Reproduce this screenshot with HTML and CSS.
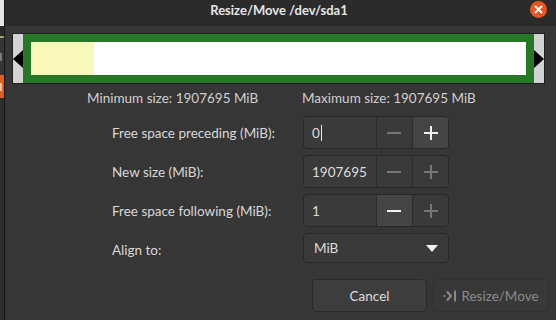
FILE: index.html
```html
<!DOCTYPE html>
<html>
<head>
<meta charset="utf-8">
<link rel="stylesheet" href="styles.css">
</head>
<body>
<div class="screen">
  <div class="bgwin">
    <div class="bg-top"></div>
    <div class="bg-bar"></div>
    <div class="bg-line"></div>
    <div class="bg-mid"><span class="bg-mark"></span></div>
    <div class="bg-orange"><span class="bg-mark light"></span></div>
    <div class="bg-rest"></div>
  </div>
  <div class="dialog">
    <header class="titlebar">
      <span class="title">Resize/Move /dev/sda1</span>
      <span class="close">
        <svg width="17" height="17" viewBox="0 0 17 17"><circle cx="8.5" cy="8.5" r="8.5" fill="#e95420"/><path d="M5.5 5.5 L11.5 11.5 M11.5 5.5 L5.5 11.5" stroke="#fff" stroke-width="2" stroke-linecap="round"/></svg>
      </span>
    </header>
    <main class="content">
      <div class="partbar">
        <div class="handle handle-left"><span class="tri tri-left"></span></div>
        <div class="part">
          <div class="used"></div>
          <div class="free"></div>
        </div>
        <div class="handle handle-right"><span class="tri tri-right"></span></div>
      </div>
      <div class="limits">
        <span class="limit-min">Minimum size: 1907695 MiB</span>
        <span class="limit-max">Maximum size: 1907695 MiB</span>
      </div>
      <div class="form">
        <label class="lbl">Free space preceding (MiB):</label>
        <div class="spin">
          <div class="entry"><span>0</span><span class="caret"></span></div>
          <div class="sbtn dim"><svg width="14" height="14" viewBox="0 0 14 14"><path d="M0 7H14" stroke="currentColor" stroke-width="2"/></svg></div>
          <div class="sbtn hover"><svg width="14" height="14" viewBox="0 0 14 14"><path d="M0 7H14M7 0V14" stroke="currentColor" stroke-width="2"/></svg></div>
        </div>
        <label class="lbl">New size (MiB):</label>
        <div class="spin">
          <div class="entry"><span>1907695</span></div>
          <div class="sbtn dim"><svg width="14" height="14" viewBox="0 0 14 14"><path d="M0 7H14" stroke="currentColor" stroke-width="2"/></svg></div>
          <div class="sbtn dim"><svg width="14" height="14" viewBox="0 0 14 14"><path d="M0 7H14M7 0V14" stroke="currentColor" stroke-width="2"/></svg></div>
        </div>
        <label class="lbl">Free space following (MiB):</label>
        <div class="spin">
          <div class="entry"><span>1</span></div>
          <div class="sbtn hover"><svg width="14" height="14" viewBox="0 0 14 14"><path d="M0 7H14" stroke="currentColor" stroke-width="2"/></svg></div>
          <div class="sbtn dim"><svg width="14" height="14" viewBox="0 0 14 14"><path d="M0 7H14M7 0V14" stroke="currentColor" stroke-width="2"/></svg></div>
        </div>
        <label class="lbl">Align to:</label>
        <div class="combo">
          <span>MiB</span>
          <svg width="12" height="7" viewBox="0 0 12 7"><path d="M0 0H12L6 7Z" fill="#f0f0f0"/></svg>
        </div>
      </div>
      <div class="actions">
        <button class="btn">Cancel</button>
        <button class="btn disabled">
          <svg width="14" height="14" viewBox="0 0 14 14"><circle cx="1.5" cy="7" r="1.1" fill="currentColor"/><path d="M4 2.5L8 7L4 11.5" fill="none" stroke="currentColor" stroke-width="2"/><path d="M12 1.5V12.5" stroke="currentColor" stroke-width="2"/></svg>
          <span>Resize/Move</span>
        </button>
      </div>
    </main>
  </div>
</div>
</body>
</html>
```
FILE: styles.css
```css
* { box-sizing: border-box; }
html, body { margin: 0; padding: 0; }
body {
  width: 556px;
  height: 320px;
  overflow: hidden;
  background: #2d2d2d;
  font-family: "Lato", "Noto Sans", sans-serif;
  font-size: 13.5px;
}
.screen {
  display: flex;
  width: 556px;
  height: 320px;
}
.bgwin {
  width: 4px;
  display: flex;
  flex-direction: column;
  overflow: hidden;
}
.bg-top { height: 26px; background: #e4e4e4; }
.bg-bar { height: 10px; background: #2a2a2a; }
.bg-line { height: 2px; background: #8fa86a; }
.bg-mid { height: 37px; background: #353535; display: flex; align-items: center; }
.bg-orange { height: 23px; background: #e05e26; display: flex; align-items: center; }
.bg-mark { width: 2px; height: 8px; background: #7a7a7a; }
.bg-mark.light { background: #f1c3a3; }
.bg-rest { flex: 1; background: #2e2e2e; }

.dialog {
  flex: 1;
  display: flex;
  flex-direction: column;
  border-left: 1px solid #161616;
  background: #363636;
  color: #d8d8d8;
}
.titlebar {
  height: 26px;
  background: #2b2b2b;
  display: flex;
  align-items: center;
  justify-content: center;
  position: relative;
}
.title {
  font-weight: bold;
  font-size: 13px;
  color: #e6e6e6;
  margin-left: -3px;
  margin-top: -6px;
}
.close {
  position: absolute;
  right: 9px;
  top: 1px;
  width: 17px;
  height: 17px;
  display: flex;
}
.content {
  flex: 1;
  display: flex;
  flex-direction: column;
}
.partbar {
  margin: 7px 11px 0 7px;
  height: 51px;
  border: 1px solid #1f1f1f;
  display: flex;
}
.handle {
  width: 10px;
  background: #d3d3d3;
  display: flex;
  align-items: center;
}
.handle-right { justify-content: flex-end; }
.tri { width: 0; height: 0; border-top: 9px solid transparent; border-bottom: 9px solid transparent; }
.tri-left { border-right: 10px solid #000; }
.tri-right { border-left: 10px solid #000; }
.part {
  flex: 1;
  background: #267726;
  padding: 8px;
  display: flex;
}
.used { width: 63px; background: #f8f8bb; }
.free { flex: 1; background: #ffffff; }

.limits {
  display: flex;
  height: 22px;
  align-items: center;
  padding-left: 82px;
  margin-top: 3px;
  color: #cfcfcf;
}
.limit-min { width: 215px; }

.form {
  display: grid;
  grid-template-columns: 191px 146px;
  grid-auto-rows: 33px;
  row-gap: 6px;
  padding-left: 107px;
  margin-top: 7px;
}
.lbl { display: flex; align-items: center; color: #d8d8d8; }
.spin {
  display: flex;
  border: 1px solid #282828;
  border-radius: 4px;
  background: #3a3a3a;
  overflow: hidden;
}
.entry {
  width: 73px;
  display: flex;
  align-items: center;
  padding-left: 8px;
  color: #dcdcdc;
  border-right: 1px solid #2c2c2c;
}
.caret { width: 1px; height: 16px; background: #e8e8e8; margin-left: 1px; }
.sbtn {
  width: 36px;
  display: flex;
  align-items: center;
  justify-content: center;
  color: #f2f2f2;
}
.sbtn + .sbtn { border-left: 1px solid #2c2c2c; }
.sbtn.dim { color: #767676; }
.sbtn.hover { background: #454545; }
.combo {
  height: 30px;
  border: 1px solid #282828;
  border-radius: 4px;
  background: #3a3a3a;
  display: flex;
  align-items: center;
  justify-content: space-between;
  padding: 0 10px 0 10px;
  color: #dcdcdc;
}

.actions {
  display: flex;
  justify-content: flex-end;
  gap: 6px;
  padding-right: 7px;
  margin-top: auto;
  margin-bottom: 8px;
}
.btn {
  height: 33px;
  width: 115px;
  border: 1px solid #2a2a2a;
  border-radius: 4px;
  background: #3d3d3d;
  color: #dcdcdc;
  font: inherit;
  display: flex;
  align-items: center;
  justify-content: center;
  gap: 4px;
  padding: 0;
}
.btn.disabled {
  width: 116px;
  background: #383838;
  border-color: #313131;
  color: #8a8a8a;
}
```
